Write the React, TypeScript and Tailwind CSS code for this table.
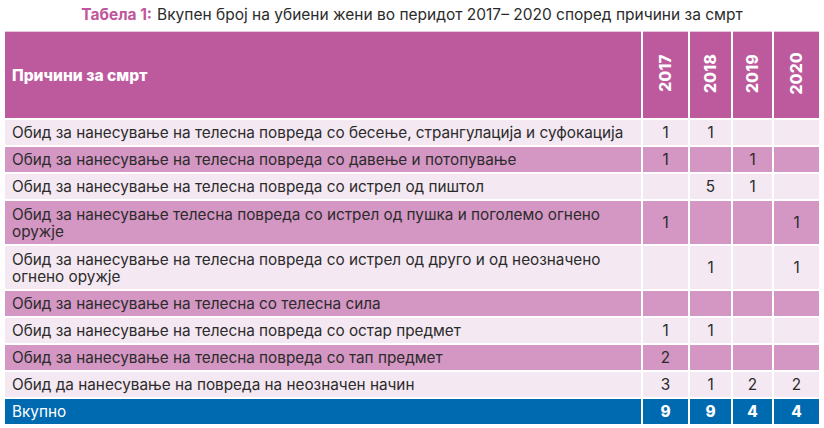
const years = ['2017', '2018', '2019', '2020'];

interface Row {
  label: string;
  values: (number | null)[];
  tall?: boolean;
}

const rows: Row[] = [
  { label: 'Обид за нанесување на телесна повреда со бесење, странгулација и суфокација', values: [1, 1, null, null] },
  { label: 'Обид за нанесување на телесна повреда со давење и потопување', values: [1, null, 1, null] },
  { label: 'Обид за нанесување на телесна повреда со истрел од пиштол', values: [null, 5, 1, null] },
  { label: 'Обид за нанесување телесна повреда со истрел од пушка и поголемо огнено оружје', values: [1, null, null, 1], tall: true },
  { label: 'Обид за нанесување на телесна повреда со истрел од друго и од неозначено огнено оружје', values: [null, 1, null, 1], tall: true },
  { label: 'Обид за нанесување на телесна со телесна сила', values: [null, null, null, null] },
  { label: 'Обид за нанесување на телесна повреда со остар предмет', values: [1, 1, null, null] },
  { label: 'Обид за нанесување на телесна повреда со тап предмет', values: [2, null, null, null] },
  { label: 'Обид да нанесување на повреда на неозначен начин', values: [3, 1, 2, 2] },
];

const totals = [9, 9, 4, 4];

export default function App() {
  return (
    <div className="w-[824px] h-[428px] bg-white font-['Inter','Noto_Sans',sans-serif] text-[#2b2b2b] overflow-hidden">
      <h1 className="h-[28px] flex items-center justify-center text-[15.5px] pt-[1px]">
        <span className="font-bold text-[#c0569e] mr-[5px]">Табела 1:</span>
        <span>Вкупен број на убиени жени во перидот 2017– 2020 според причини за смрт</span>
      </h1>
      <div className="pl-[5px] pt-[3px]">
        <table className="w-[815px] border-collapse text-[15.3px] leading-[17px] table-fixed">
          <colgroup>
            <col className="w-[637px]" />
            <col className="w-[47px]" />
            <col className="w-[43px]" />
            <col className="w-[41px]" />
            <col className="w-[47px]" />
          </colgroup>
          <thead>
            <tr className="h-[86px] bg-[#bd5a9e] text-white border-t border-[#e9c6de]">
              <th className="text-left font-extrabold text-[15.6px] px-[7px] border-r-2 border-b-2 border-white">Причини за смрт</th>
              {years.map((y) => (
                <th key={y} className="border-x-2 border-b-2 border-white p-0 font-extrabold text-[15.5px]">
                  <div className="flex justify-center items-center h-[86px] pb-[4px]">
                    <span className="[writing-mode:vertical-rl] rotate-180 tracking-[0.3px]">{y}</span>
                  </div>
                </th>
              ))}
            </tr>
          </thead>
          <tbody>
            {rows.map((r, i) => (
              <tr
                key={i}
                className={`${r.tall ? 'h-[45px]' : 'h-[27px]'} ${i % 2 === 0 ? 'bg-[#f4e8f2]' : 'bg-[#d496c3]'}`}
              >
                <td className="px-[7px] py-0 border-r-2 border-b-2 border-white">{r.label}</td>
                {r.values.map((v, j) => (
                  <td key={j} className="text-center border-x-2 border-b-2 border-white">
                    {v ?? ''}
                  </td>
                ))}
              </tr>
            ))}
            <tr className="h-[26px] bg-[#006ab0] text-white">
              <td className="px-[7px] border-r-2 border-white">Вкупно</td>
              {totals.map((t, j) => (
                <td key={j} className="text-center font-extrabold border-x-2 border-white">
                  {t}
                </td>
              ))}
            </tr>
          </tbody>
        </table>
      </div>
    </div>
  );
}
